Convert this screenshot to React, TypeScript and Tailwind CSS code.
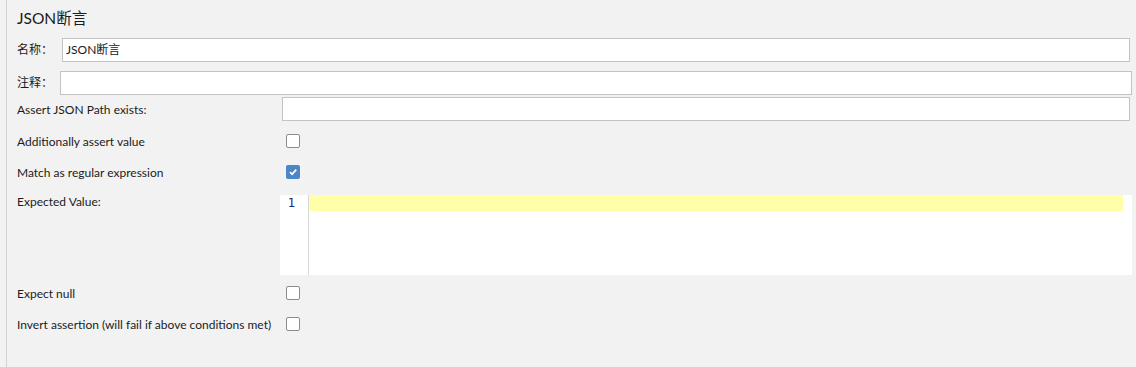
const font = { fontFamily: 'Lato, "Noto Sans CJK SC", sans-serif' };

function Checkbox({ checked = false }: { checked?: boolean }) {
  if (checked) {
    return (
      <div className="w-[14px] h-[14px] rounded-[2px] bg-[#4a86c8] flex items-center justify-center">
        <svg width="10" height="10" viewBox="0 0 10 10">
          <path d="M2 5.2 L4.1 7.3 L8.2 2.6" fill="none" stroke="#fff" strokeWidth="1.8" />
        </svg>
      </div>
    );
  }
  return <div className="w-[14px] h-[14px] rounded-[2px] border border-[#8c8c8c] bg-white" />;
}

function CheckRow({ label, checked, className }: { label: string; checked?: boolean; className: string }) {
  return (
    <div className={`flex items-center h-[24px] ${className}`}>
      <span className="w-[269px] whitespace-nowrap text-[12px] text-[#1b1b1b] pt-[2px]">{label}</span>
      <Checkbox checked={checked} />
    </div>
  );
}

export default function App() {
  return (
    <div className="w-[1136px] h-[367px] bg-[#f2f2f2] pl-[6px] overflow-hidden" style={font}>
      <div className="h-full border-l border-[#d2d2d2] pl-[10px] pr-[4px] pt-[8px] flex flex-col">
        <div className="h-[22px] flex items-center text-[15.5px] text-[#1b1b1b]">JSON断言</div>

        <div className="mt-[8px] flex items-center h-[24px] pr-[2px]">
          <span className="w-[45px] text-[12px] text-[#1b1b1b]">名称：</span>
          <div className="flex-1 h-[24px] bg-white border border-[#c4c4c4] flex items-center pl-[3px] text-[12px] text-[#1b1b1b]">
            JSON断言
          </div>
        </div>

        <div className="mt-[9px] flex items-center h-[24px]">
          <span className="w-[43px] text-[12px] text-[#1b1b1b]">注释：</span>
          <div className="flex-1 h-[24px] bg-white border border-[#c4c4c4]" />
        </div>

        <div className="mt-[2px] flex items-center h-[24px] pr-[2px]">
          <span className="w-[265px] text-[12px] text-[#1b1b1b] pt-[2px]">Assert JSON Path exists:</span>
          <div className="flex-1 h-[24px] bg-white border border-[#c4c4c4]" />
        </div>

        <CheckRow label="Additionally assert value" className="mt-[8px]" />
        <CheckRow label="Match as regular expression" checked className="mt-[7px]" />

        <div className="mt-[11px] flex h-[80px]">
          <span className="w-[263px] text-[12px] text-[#1b1b1b] leading-[14px]">Expected Value:</span>
          <div className="flex-1 flex bg-white">
            <div className="w-[29px] border-r border-[#d8d8d8] text-right pr-[13px] text-[12px] leading-[16px] text-[#202080]" style={{ fontFamily: '"DejaVu Sans Mono", monospace' }}>
              1
            </div>
            <div className="flex-1 pr-[9px]">
              <div className="h-[16px] bg-[#ffffaa]" />
            </div>
          </div>
        </div>

        <CheckRow label="Expect null" className="mt-[6px]" />
        <CheckRow label="Invert assertion (will fail if above conditions met)" className="mt-[7px]" />
      </div>
    </div>
  );
}
